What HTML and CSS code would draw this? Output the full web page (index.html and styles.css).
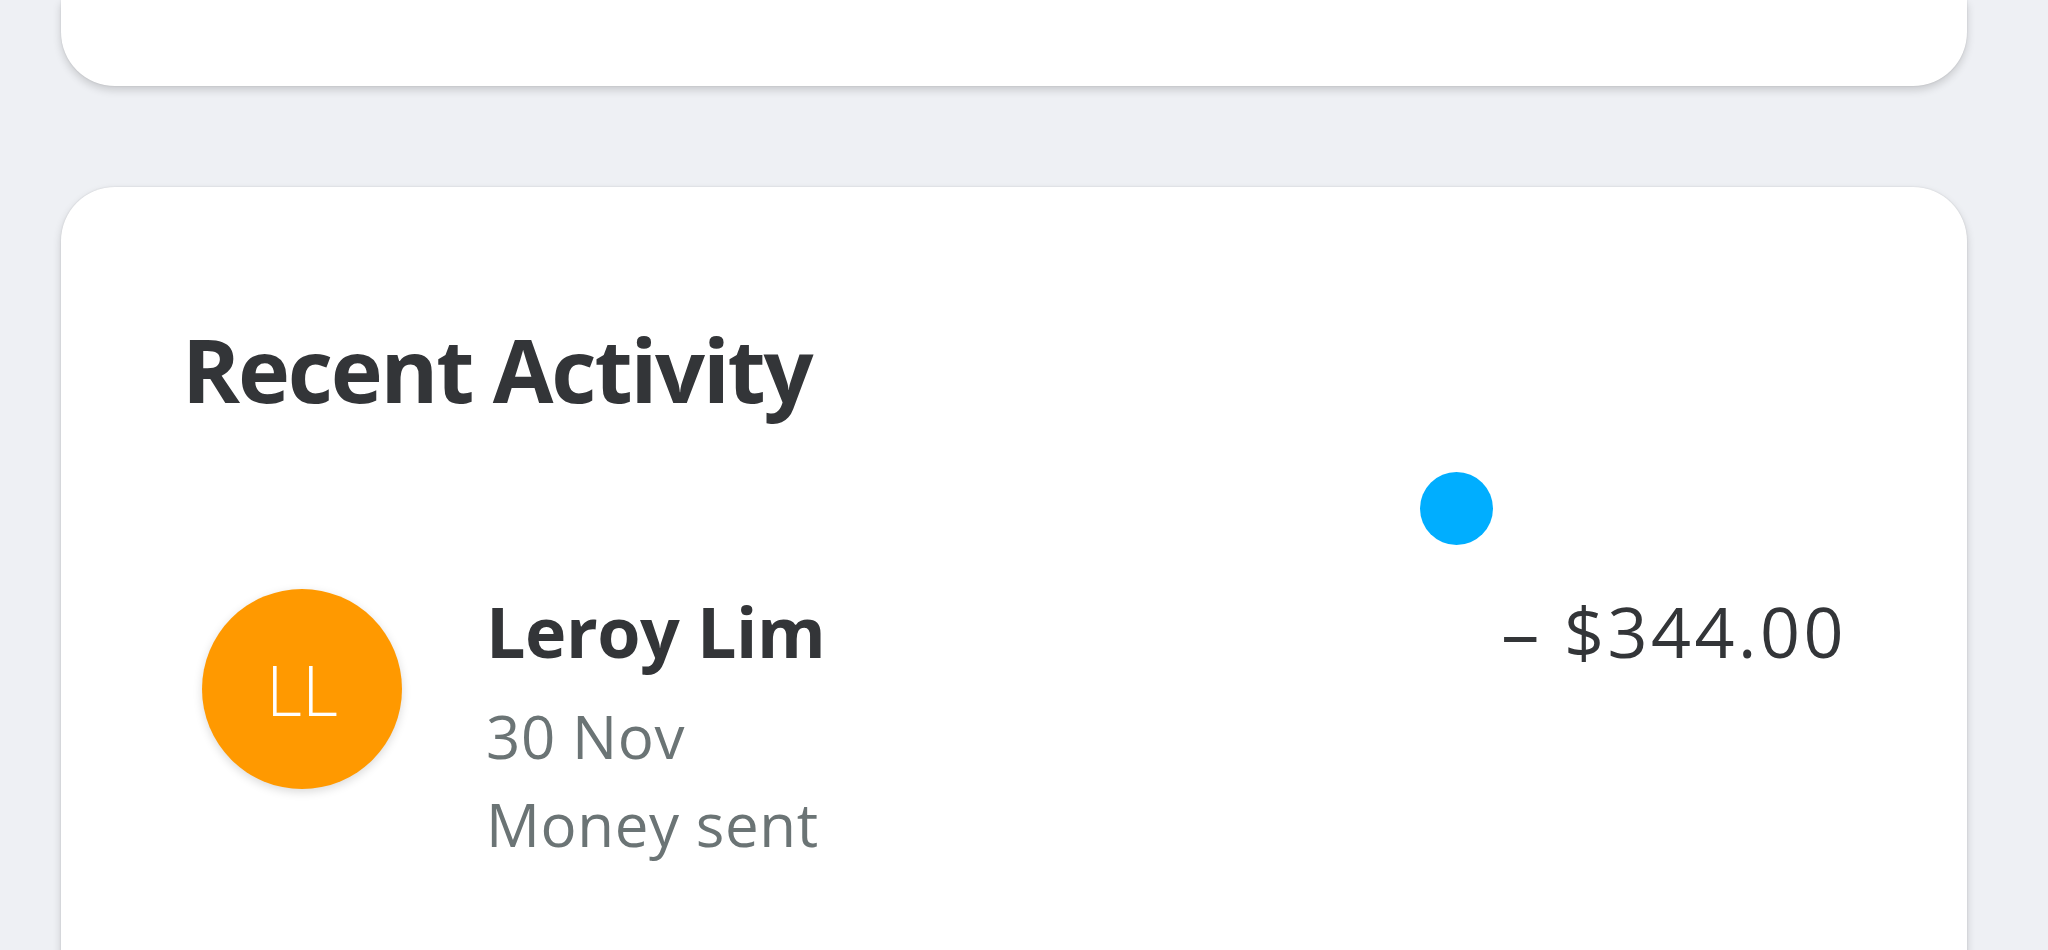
FILE: index.html
```html
<!DOCTYPE html>
<html lang="en">
<head>
<meta charset="utf-8">
<title>Recent Activity</title>
<link rel="stylesheet" href="styles.css">
</head>
<body>
  <main class="page">
    <section class="card card-top"></section>
    <section class="card card-activity">
      <h2 class="card-title">Recent Activity</h2>
      <span class="status-dot"></span>
      <ul class="activity-list">
        <li class="activity-row">
          <div class="avatar">LL</div>
          <div class="activity-info">
            <div class="activity-name">Leroy Lim</div>
            <div class="activity-date">30 Nov</div>
            <div class="activity-type">Money sent</div>
          </div>
          <div class="activity-amount"><span class="amount-sign">–</span>$344.00</div>
        </li>
      </ul>
    </section>
  </main>
</body>
</html>
```

FILE: styles.css
```css
* {
  box-sizing: border-box;
}

html, body {
  margin: 0;
  padding: 0;
}

body {
  background: #eef0f4;
  font-family: "Open Sans", "Noto Sans", sans-serif;
  color: #333538;
  overflow: hidden;
}

.page {
  display: flex;
  flex-direction: column;
  gap: 101px;
  padding: 0 81px 0 61px;
}

.card {
  background: #ffffff;
  border-radius: 54px;
  box-shadow: 0 4px 9px rgba(0, 0, 0, 0.16), 0 0 2px rgba(0, 0, 0, 0.12);
}

.card-top {
  height: 86px;
  border-radius: 0 0 54px 54px;
}

.card-activity {
  position: relative;
  min-height: 900px;
  padding: 138px 120px 0 121px;
}

.card-title {
  margin: 0;
  font-size: 88px;
  line-height: 88px;
  font-weight: 700;
  letter-spacing: -2.2px;
  color: #333538;
}

.status-dot {
  position: absolute;
  left: 1359px;
  top: 285px;
  width: 73px;
  height: 73px;
  border-radius: 50%;
  background: #00aeff;
}

.activity-list {
  list-style: none;
  margin: 176px 0 0 0;
  padding: 0 0 0 20px;
}

.activity-row {
  display: flex;
  align-items: flex-start;
}

.avatar {
  flex: 0 0 auto;
  width: 200px;
  height: 200px;
  border-radius: 50%;
  background: #ff9900;
  color: #ffffff;
  display: flex;
  align-items: center;
  justify-content: center;
  font-size: 70px;
  font-weight: 300;
  box-shadow: 0 3px 10px rgba(0, 0, 0, 0.15);
}

.activity-info {
  flex: 1 1 auto;
  margin: 7px 0 0 84px;
  display: flex;
  flex-direction: column;
}

.activity-name {
  font-size: 70px;
  line-height: 70px;
  font-weight: 700;
  letter-spacing: -0.5px;
  color: #333538;
}

.activity-date,
.activity-type {
  font-size: 60px;
  line-height: 60px;
  letter-spacing: 0.6px;
  color: #6b7475;
}

.activity-date {
  margin-top: 40px;
}

.activity-type {
  margin-top: 28px;
}

.activity-amount {
  flex: 0 0 auto;
  margin-top: 7px;
  font-size: 70px;
  line-height: 70px;
  color: #333538;
  letter-spacing: 3.5px;
}

.amount-sign {
  display: inline-block;
  margin-right: 22px;
  transform: scaleX(1.1);
}
```
